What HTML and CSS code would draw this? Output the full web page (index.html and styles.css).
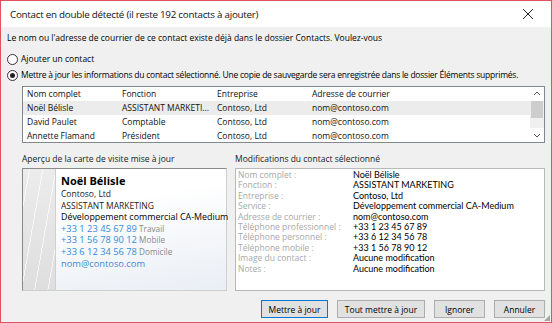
FILE: index.html
```html
<html>
  <head>
    <meta charset="utf-8">
    <title>Contact en double détecté</title>
    <link rel="stylesheet" href="styles.css">
  </head>
  <body>
    <div class="window">
      <div class="titlebar">
        <span class="title">Contact en double détecté (il reste 192 contacts à ajouter)</span>
        <svg class="close" width="12" height="12" viewBox="0 0 12 12">
          <path d="M1 1 L11 11 M11 1 L1 11" stroke="#222" stroke-width="1" fill="none"/>
        </svg>
      </div>

      <div class="content">
        <p class="intro">Le nom ou l'adresse de courrier de ce contact existe déjà dans le dossier Contacts. Voulez-vous</p>

        <div class="radio"><span class="dot"></span>Ajouter un contact</div>
        <div class="radio checked"><span class="dot"></span>Mettre à jour les informations du contact sélectionné. Une copie de sauvegarde sera enregistrée dans le dossier Éléments supprimés.</div>

        <div class="list">
          <div class="rows">
            <div class="row head">
              <span>Nom complet</span><span>Fonction</span><span>Entreprise</span><span>Adresse de courrier</span>
            </div>
            <div class="row selected">
              <span>Noël Bélisle</span><span>ASSISTANT MARKETI...</span><span>Contoso, Ltd</span><span>nom@contoso.com</span>
            </div>
            <div class="row">
              <span>David Paulet</span><span>Comptable</span><span>Contoso, Ltd</span><span>nom@contoso.com</span>
            </div>
            <div class="row">
              <span>Annette Flamand</span><span>Président</span><span>Contoso, Ltd</span><span>nom@contoso.com</span>
            </div>
          </div>
          <div class="scrollbar">
            <svg class="arrow" width="14" height="14" viewBox="0 0 14 14"><path d="M4 8 L7 5 L10 8" stroke="#555" fill="none"/></svg>
            <div class="track"><div class="thumb"></div></div>
            <svg class="arrow" width="14" height="14" viewBox="0 0 14 14"><path d="M4 6 L7 9 L10 6" stroke="#555" fill="none"/></svg>
          </div>
        </div>

        <div class="panes">
          <div class="pane left">
            <div class="pane-title">Aperçu de la carte de visite mise à jour</div>
            <div class="card">
              <div class="card-strip"></div>
              <div class="card-text">
                <div class="card-name">Noël Bélisle</div>
                <div>Contoso, Ltd</div>
                <div>ASSISTANT MARKETING</div>
                <div class="dept">Développement commercial CA-Medium</div>
                <div><span class="blue">+33 1 23 45 67 89</span> <span class="grey">Travail</span></div>
                <div><span class="blue">+33 1 56 78 90 12</span> <span class="grey">Mobile</span></div>
                <div><span class="blue">+33 6 12 34 56 78</span> <span class="grey">Domicile</span></div>
                <div class="blue">nom@contoso.com</div>
              </div>
            </div>
          </div>

          <div class="pane right">
            <div class="pane-title">Modifications du contact sélectionné</div>
            <div class="changes">
              <span class="label">Nom complet :</span><span class="value">Noël Bélisle</span>
              <span class="label">Fonction :</span><span class="value">ASSISTANT MARKETING</span>
              <span class="label">Entreprise :</span><span class="value">Contoso, Ltd</span>
              <span class="label">Service :</span><span class="value">Développement commercial CA-Medium</span>
              <span class="label">Adresse de courrier :</span><span class="value">nom@contoso.com</span>
              <span class="label">Téléphone professionnel :</span><span class="value">+33 1 23 45 67 89</span>
              <span class="label">Téléphone personnel :</span><span class="value">+33 6 12 34 56 78</span>
              <span class="label">Téléphone mobile :</span><span class="value">+33 1 56 78 90 12</span>
              <span class="label">Image du contact :</span><span class="value">Aucune modification</span>
              <span class="label">Notes :</span><span class="value">Aucune modification</span>
            </div>
          </div>
        </div>

        <div class="buttons">
          <button class="btn default">Mettre à jour</button>
          <button class="btn wide">Tout mettre à jour</button>
          <button class="btn">Ignorer</button>
          <button class="btn">Annuler</button>
        </div>
        <div class="grip"></div>
      </div>
    </div>
  </body>
</html>
```

FILE: styles.css
```css
* {
  box-sizing: border-box;
}

html, body {
  margin: 0;
  padding: 0;
  background: #f0f0f0;
}

body {
  font-family: "Open Sans", "Noto Sans", Arial, sans-serif;
  font-size: 8.5px;
  color: #000;
}

.window {
  width: 552px;
  height: 323px;
  border: 1px solid #e0525e;
  background: #f0f0f0;
  display: flex;
  flex-direction: column;
}

.titlebar {
  height: 26px;
  background: #fff;
  display: flex;
  align-items: center;
  justify-content: space-between;
  padding: 0 17px 0 9px;
}

.title {
  font-size: 9.8px;
  letter-spacing: -0.25px;
  color: #111;
}

.content {
  position: relative;
  flex-grow: 1;
  padding: 0 6px 0 6px;
}

.intro {
  margin: 5px 0 0;
  line-height: 12px;
}

.radio {
  display: flex;
  align-items: center;
  line-height: 12px;
  height: 12px;
  white-space: nowrap;
}
.radio:first-of-type {
  margin-top: 9px;
}
.radio + .radio {
  margin-top: 4px;
}
.radio.checked {
  letter-spacing: -0.23px;
}

.dot {
  width: 11px;
  height: 11px;
  border: 1px solid #333;
  border-radius: 50%;
  background: #fff;
  margin-right: 3px;
  position: relative;
  flex-shrink: 0;
}
.checked .dot::after {
  content: "";
  position: absolute;
  left: 2px;
  top: 2px;
  width: 5px;
  height: 5px;
  border-radius: 50%;
  background: #222;
}

.list {
  display: flex;
  margin: 5px 0 0 15px;
  height: 57px;
  border: 1px solid #828790;
  background: #fff;
}

.rows {
  flex-grow: 1;
}

.row {
  display: grid;
  grid-template-columns: 95px 95px 95px 1fr;
  height: 14px;
  line-height: 14px;
  padding-left: 4px;
  color: #111;
}
.row.selected {
  background: #ececec;
}

.scrollbar {
  width: 14px;
  display: flex;
  flex-direction: column;
}
.arrow {
  display: block;
  flex-shrink: 0;
}
.track {
  flex-grow: 1;
  background: #f0f0f0;
  padding: 0 1px;
}
.thumb {
  height: 17px;
  background: #cdcdcd;
}

.panes {
  display: flex;
  gap: 8px;
  margin: 10px 0 0 15px;
}

.pane-title {
  line-height: 12px;
  color: #222;
  margin-bottom: 3px;
}

.pane.left {
  width: 205px;
}
.pane.right {
  flex-grow: 1;
}

.card {
  display: flex;
  height: 123px;
  border: 1px solid #8a8a8a;
  border-right-color: #cfcfcf;
  border-bottom-color: #cfcfcf;
  background: linear-gradient(170deg, #ffffff 30%, #e9eef5 100%);
}

.card-strip {
  width: 33px;
  flex-shrink: 0;
  background:
    repeating-linear-gradient(100deg, transparent 0 6px, rgba(255,255,255,.7) 6px 7px, transparent 7px 13px),
    linear-gradient(180deg, #ececec, #dedede);
  border-right: 1px solid #d0d0d0;
}

.card-text {
  padding: 5px 0 0 5px;
  line-height: 11.6px;
  color: #1a1a1a;
  white-space: nowrap;
}
.card-name {
  font-size: 11px;
  font-weight: 700;
  line-height: 14px;
  color: #000;
}
.dept {
  font-size: 8.9px;
  color: #000;
}
.blue {
  color: #3a8ad6;
  font-size: 9.3px;
}
.grey {
  color: #8a8a8a;
  font-size: 8.2px;
}

.changes {
  height: 123px;
  border: 1px solid #b9b9b9;
  background: #fff;
  display: grid;
  grid-template-columns: 115px 1fr;
  grid-auto-rows: 10.4px;
  align-content: start;
  padding: 1px 0 0 2px;
  line-height: 10.4px;
  color: #111;
}
.changes .label {
  color: #a8a8a8;
}
.changes .value {
  font-family: Lato, "Open Sans", sans-serif;
  font-size: 9px;
  color: #000;
}

.buttons {
  display: flex;
  justify-content: flex-end;
  gap: 9px;
  margin-top: 9px;
}

.btn {
  font-family: inherit;
  font-size: 8.5px;
  height: 18px;
  padding: 0;
  background: #e1e1e1;
  border: 1px solid #adadad;
  color: #000;
  width: 51px;
}
.btn.default {
  width: 67px;
  border: 1px solid #0078d7;
}
.btn.wide {
  width: 88px;
}

.grip {
  position: absolute;
  right: 1px;
  bottom: 1px;
  width: 6px;
  height: 6px;
  background: radial-gradient(circle, #a0a0a0 0.7px, transparent 0.8px) 0 0 / 2px 2px;
  clip-path: polygon(100% 0, 100% 100%, 0 100%);
}
```
